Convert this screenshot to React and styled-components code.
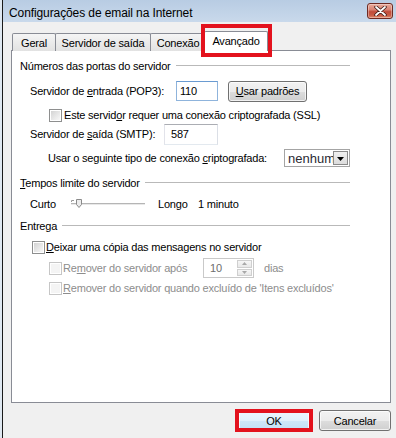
import React from 'react';
import styled, { createGlobalStyle, css } from 'styled-components';

const FONT = `"Liberation Sans", Arial, sans-serif`;

const Global = createGlobalStyle`
  * { box-sizing: border-box; }
  html, body { margin: 0; padding: 0; width: 396px; height: 438px; overflow: hidden; background: #dfe8f1; }
  #root { width: 396px; height: 438px; }
  body { font-family: ${FONT}; font-size: 11px; color: #000; }
`;

const Frame = styled.div`
  margin-left: 2px;
  width: 394px;
  height: 438px;
  border-left: 1px solid #1a1a1a;
  display: flex;
  flex-direction: column;
  background: #f0f0f0;
`;

const TitleBar = styled.div`
  height: 22px;
  flex: none;
  display: flex;
  align-items: center;
  justify-content: space-between;
  padding: 0 3px 0 6px;
  background: linear-gradient(to bottom, #b8cce3, #c9d9eb);
`;

const TitleText = styled.span`
  font-size: 12px;
  padding-top: 4px;
  letter-spacing: -0.1px;
  color: #000;
`;

const CloseBtn = styled.div`
  width: 26px;
  height: 16px;
  border: 1px solid #6e2a22;
  border-radius: 3px;
  background: linear-gradient(to bottom, #e9aa9a 0%, #d98474 40%, #c04c3a 55%, #c75a44 80%, #df8b6c 100%);
  display: flex;
  align-items: center;
  justify-content: center;
  box-shadow: inset 0 0 0 1px rgba(255, 255, 255, 0.35);
`;

const Body = styled.div`
  flex: 1;
  display: flex;
  flex-direction: column;
  padding: 9px 5px 0 8px;
  letter-spacing: -0.2px;
`;

const TabStrip = styled.div`
  display: flex;
  align-items: flex-end;
  height: 20px;
  margin-bottom: -1px;
  padding-left: 1px;
  position: relative;
  z-index: 1;
`;

const Tab = styled.div`
  position: relative;
  width: ${(p) => p.$w}px;
  height: 18px;
  border: 1px solid #898c95;
  border-bottom: none;
  border-radius: 2px 2px 0 0;
  background: linear-gradient(to bottom, #f5f5f5, #ebebeb 50%, #e2e2e2);
  display: flex;
  align-items: center;
  justify-content: center;
  font-size: 11px;
  & + & { margin-left: -1px; }
  ${(p) =>
    p.$active &&
    css`
      height: 20px;
      background: #fff;
      margin-left: -2px !important;
      padding-bottom: 1px;
    `}
`;

const Annot = styled.span`
  position: absolute;
  top: ${(p) => p.$t}px;
  bottom: ${(p) => p.$b}px;
  left: ${(p) => p.$l}px;
  right: ${(p) => p.$r}px;
  border: 4px solid #e3121d;
  pointer-events: none;
`;

const Panel = styled.div`
  flex: 1;
  background: #fff;
  border: 1px solid #898c95;
  padding: 7px 40px 0 8px;
  display: flex;
  flex-direction: column;
`;

const GroupHeader = styled.div`
  display: flex;
  align-items: center;
  height: 16px;
  margin-top: ${(p) => p.$mt || 0}px;
  &::after {
    content: '';
    flex: 1;
    margin-left: 5px;
    border-top: 1px solid #b9b9b9;
    border-bottom: 1px solid #fff;
  }
`;

const Row = styled.div`
  display: flex;
  align-items: center;
  height: ${(p) => p.$h}px;
  margin-top: ${(p) => p.$mt || 0}px;
  padding-left: ${(p) => p.$indent || 0}px;
`;

const Label = styled.span`
  flex: none;
  width: ${(p) => (p.$w ? `${p.$w}px` : 'auto')};
  margin-left: ${(p) => p.$ml || 0}px;
  color: ${(p) => (p.$disabled ? '#8d8d8d' : '#000')};
  white-space: nowrap;
`;

const U = styled.span`
  text-decoration: underline;
`;

const TextBox = styled.div`
  flex: none;
  width: ${(p) => p.$w}px;
  height: ${(p) => p.$h}px;
  border: 1px solid ${(p) => (p.$focus ? '#8fb4dc' : '#abadb3')};
  border-top-color: ${(p) => (p.$focus ? '#6a9bd1' : '#abadb3')};
  ${(p) => !p.$focus && css`border-left-color: #e2e3ea; border-right-color: #dbdfe6; border-bottom-color: #e3e9ef;`}
  background: #fff;
  display: flex;
  align-items: center;
  padding-left: ${(p) => p.$pl || 3}px;
  font-size: 11px;
`;

const Button = styled.div`
  position: relative;
  flex: none;
  width: ${(p) => p.$w}px;
  height: 21px;
  margin-left: ${(p) => p.$ml || 0}px;
  border: 1px solid #707070;
  border-radius: 3px;
  background: linear-gradient(to bottom, #f2f2f2 0%, #ebebeb 50%, #dddddd 51%, #cfcfcf 100%);
  box-shadow: inset 0 0 0 1px rgba(255, 255, 255, 0.7);
  display: flex;
  align-items: center;
  justify-content: center;
  font-size: 11px;
  ${(p) =>
    p.$default &&
    css`
      border-color: #3c7fb1;
      background: linear-gradient(to bottom, #edf6fd 0%, #e1f0fb 50%, #cfe7f8 51%, #c2e0f5 100%);
    `}
`;

const Check = styled.span`
  flex: none;
  width: 13px;
  height: 13px;
  border: 1px solid ${(p) => (p.$disabled ? '#c6c6c6' : '#8e8f8f')};
  background: ${(p) =>
    p.$disabled
      ? '#f4f4f4'
      : 'linear-gradient(135deg, #cfcfcf 0%, #eaeaea 60%, #fbfbfb 100%)'};
  box-shadow: inset 0 0 0 1px #fff;
`;

const Select = styled.div`
  position: relative;
  flex: none;
  width: 66px;
  height: 18px;
  border: 1px solid #a4a4a4;
  background: #fff;
  display: flex;
  align-items: center;
  padding-left: 3px;
  overflow: hidden;
  font-size: 13px;
  letter-spacing: 0;
  color: #2b2b33;
`;

const SelectArrow = styled.span`
  position: absolute;
  right: 1px;
  top: 1px;
  width: 15px;
  height: 14px;
  border: 1px solid #8a8a8a;
  background: linear-gradient(to bottom, #f0f0f0, #dcdcdc);
  display: flex;
  align-items: center;
  justify-content: center;
  padding-top: 2px;
`;

const Spinner = styled.div`
  flex: none;
  display: flex;
  width: 51px;
  height: 20px;
  border: 1px solid #c9c9c9;
  background: #fff;
  padding: 1px;
`;

const SpinText = styled.span`
  flex: 1;
  color: #6d6d6d;
  padding-left: 5px;
  display: flex;
  align-items: center;
`;

const SpinButtons = styled.div`
  width: 15px;
  display: flex;
  flex-direction: column;
  gap: 1px;
`;

const SpinBtn = styled.span`
  flex: 1;
  border: 1px solid #cfcfcf;
  background: linear-gradient(to bottom, #f6f6f6, #e8e8e8);
  display: flex;
  align-items: center;
  justify-content: center;
`;

const ButtonRow = styled.div`
  display: flex;
  justify-content: flex-end;
  align-items: center;
  gap: 9px;
  height: 21px;
  margin: 7px 0 7px;
`;

const SliderSvg = styled.svg`
  flex: none;
  margin-right: 13px;
`;

function Slider() {
  return (
    <SliderSvg width="74" height="10" viewBox="0 0 74 10">
      <rect x="0" y="4" width="74" height="1" fill="#b5b5b5" />
      <rect x="0" y="5" width="74" height="1" fill="#e8e8e8" />
      <path d="M0.5 3 V1.5 H3" stroke="#9a9a9a" fill="none" />
      <path d="M5.5 0.5 H10.5 V5.5 L8 8.5 L5.5 5.5 Z" fill="#ececec" stroke="#8a8a8a" />
    </SliderSvg>
  );
}

export default function App() {
  return (
    <>
      <Global />
      <Frame>
        <TitleBar>
          <TitleText>Configurações de email na Internet</TitleText>
          <CloseBtn>
            <svg width="13" height="10" viewBox="0 0 13 10">
              <path d="M2 1 L11 9 M11 1 L2 9" stroke="#3d1b16" strokeWidth="3.4" strokeLinecap="round" />
              <path d="M2 1 L11 9 M11 1 L2 9" stroke="#fff" strokeWidth="1.8" strokeLinecap="round" />
            </svg>
          </CloseBtn>
        </TitleBar>
        <Body>
          <TabStrip>
            <Tab $w={44}>Geral</Tab>
            <Tab $w={96}>Servidor de saída</Tab>
            <Tab $w={56}>Conexão</Tab>
            <Tab $w={64} $active>
              Avançado
              <Annot $t={-8} $b={-6} $l={-4} $r={-5} />
            </Tab>
          </TabStrip>
          <Panel>
            <GroupHeader>Números das portas do servidor</GroupHeader>
            <Row $h={22} $mt={6} $indent={10}>
              <Label $w={146}>
                Servidor de <U>e</U>ntrada (POP3):
              </Label>
              <TextBox $w={42} $h={20} $focus>110</TextBox>
              <Button $w={79} $ml={10}>
                <span>
                  <U>U</U>sar padrões
                </span>
              </Button>
            </Row>
            <Row $h={16} $mt={5} $indent={29}>
              <Check />
              <Label $ml={2}>
                Este servid<U>o</U>r requer uma conexão criptografada (SSL)
              </Label>
            </Row>
            <Row $h={22} $mt={0} $indent={10}>
              <Label $w={134}>
                Servidor de <U>s</U>aída (SMTP):
              </Label>
              <TextBox $w={54} $h={21} $pl={6}>587</TextBox>
            </Row>
            <Row $h={18} $mt={4} $indent={28}>
              <Label $w={236}>
                Usar o seguinte tipo de conexão <U>c</U>riptografada:
              </Label>
              <Select>
                nenhum
                <SelectArrow>
                  <svg width="7" height="4" viewBox="0 0 7 4">
                    <path d="M0 0 H7 L3.5 4 Z" fill="#000" />
                  </svg>
                </SelectArrow>
              </Select>
            </Row>
            <GroupHeader $mt={8}>
              <span>
                <U>T</U>empos limite do servidor
              </span>
            </GroupHeader>
            <Row $h={16} $mt={5} $indent={10}>
              <Label $w={41}>Curto</Label>
              <Slider />
              <Label $w={40}>Longo</Label>
              <Label>1 minuto</Label>
            </Row>
            <GroupHeader $mt={6}>Entrega</GroupHeader>
            <Row $h={16} $mt={5} $indent={12}>
              <Check />
              <Label $ml={1}>
                <U>D</U>eixar uma cópia das mensagens no servidor
              </Label>
            </Row>
            <Row $h={20} $mt={3} $indent={29}>
              <Check $disabled />
              <Label $w={140} $ml={1} $disabled>
                Re<U>m</U>over do servidor após
              </Label>
              <Spinner>
                <SpinText>10</SpinText>
                <SpinButtons>
                  <SpinBtn>
                    <svg width="5" height="3" viewBox="0 0 5 3">
                      <path d="M0 3 H5 L2.5 0 Z" fill="#a8a8a8" />
                    </svg>
                  </SpinBtn>
                  <SpinBtn>
                    <svg width="5" height="3" viewBox="0 0 5 3">
                      <path d="M0 0 H5 L2.5 3 Z" fill="#a8a8a8" />
                    </svg>
                  </SpinBtn>
                </SpinButtons>
              </Spinner>
              <Label $ml={10} $disabled>
                dias
              </Label>
            </Row>
            <Row $h={16} $mt={2} $indent={29}>
              <Check $disabled />
              <Label $ml={1} $disabled>
                <U>R</U>emover do servidor quando excluído de 'Itens excluídos'
              </Label>
            </Row>
          </Panel>
          <ButtonRow>
            <Button $w={72} $default>
              OK
              <Annot $t={-2} $b={-2} $l={-4} $r={-4} />
            </Button>
            <Button $w={72}>Cancelar</Button>
          </ButtonRow>
        </Body>
      </Frame>
    </>
  );
}
